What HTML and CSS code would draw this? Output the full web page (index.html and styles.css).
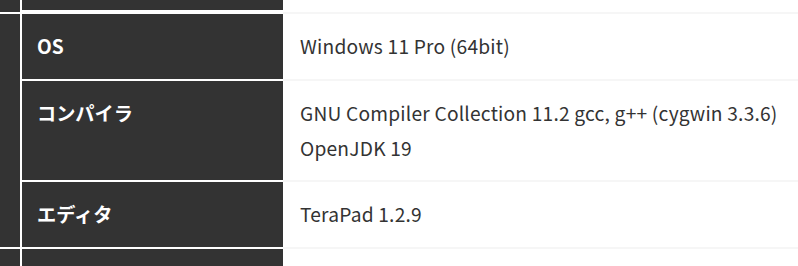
FILE: index.html
```html
<!DOCTYPE html>
<html lang="ja">
<head>
  <meta charset="UTF-8">
  <title>開発環境</title>
  <link rel="stylesheet" href="styles.css">
</head>
<body>
  <div class="spec">
    <div class="grupo grupo-top">
      <div class="lado"></div>
      <div class="filas">
        <div class="fila fila-vacia">
          <div class="th"></div>
          <div class="td"></div>
        </div>
      </div>
    </div>

    <div class="grupo">
      <div class="lado"></div>
      <div class="filas">
        <div class="fila">
          <div class="th">OS</div>
          <div class="td">Windows 11 Pro (64bit)</div>
        </div>
        <div class="fila">
          <div class="th">コンパイラ</div>
          <div class="td">GNU Compiler Collection 11.2 gcc, g++ (cygwin 3.3.6)<br>OpenJDK 19</div>
        </div>
        <div class="fila">
          <div class="th">エディタ</div>
          <div class="td">TeraPad 1.2.9</div>
        </div>
      </div>
    </div>

    <div class="grupo">
      <div class="lado"></div>
      <div class="filas">
        <div class="fila">
          <div class="th">&nbsp;</div>
          <div class="td">&nbsp;</div>
        </div>
      </div>
    </div>
  </div>
</body>
</html>
```

FILE: styles.css
```css
html, body {
  margin: 0;
  padding: 0;
  overflow: hidden;
  background-color: #ffffff;
  font-family: "Noto Sans CJK JP", "Noto Sans", sans-serif;
}

.spec {
  width: 798px;
}

.grupo {
  display: flex;
  gap: 2px;
}

.lado {
  width: 20px;
  flex: none;
  background-color: #333333;
  border-bottom: 2px solid #ffffff;
}

.filas {
  flex: 1;
  display: flex;
  flex-direction: column;
}

.fila {
  display: flex;
  font-size: 19.2px;
  line-height: 35px;
}

.th {
  width: 261px;
  flex: none;
  box-sizing: border-box;
  padding: 15px 15px;
  background-color: #333333;
  color: #ffffff;
  font-weight: bold;
  border-bottom: 2px solid #ffffff;
}

.td {
  flex: 1;
  padding: 15px 17px 14px;
  color: #333333;
  letter-spacing: 0.2px;
  border-bottom: 2px solid #f6f6f6;
}

.fila-vacia .th,
.fila-vacia .td {
  height: 12px;
  padding: 0;
}
```
